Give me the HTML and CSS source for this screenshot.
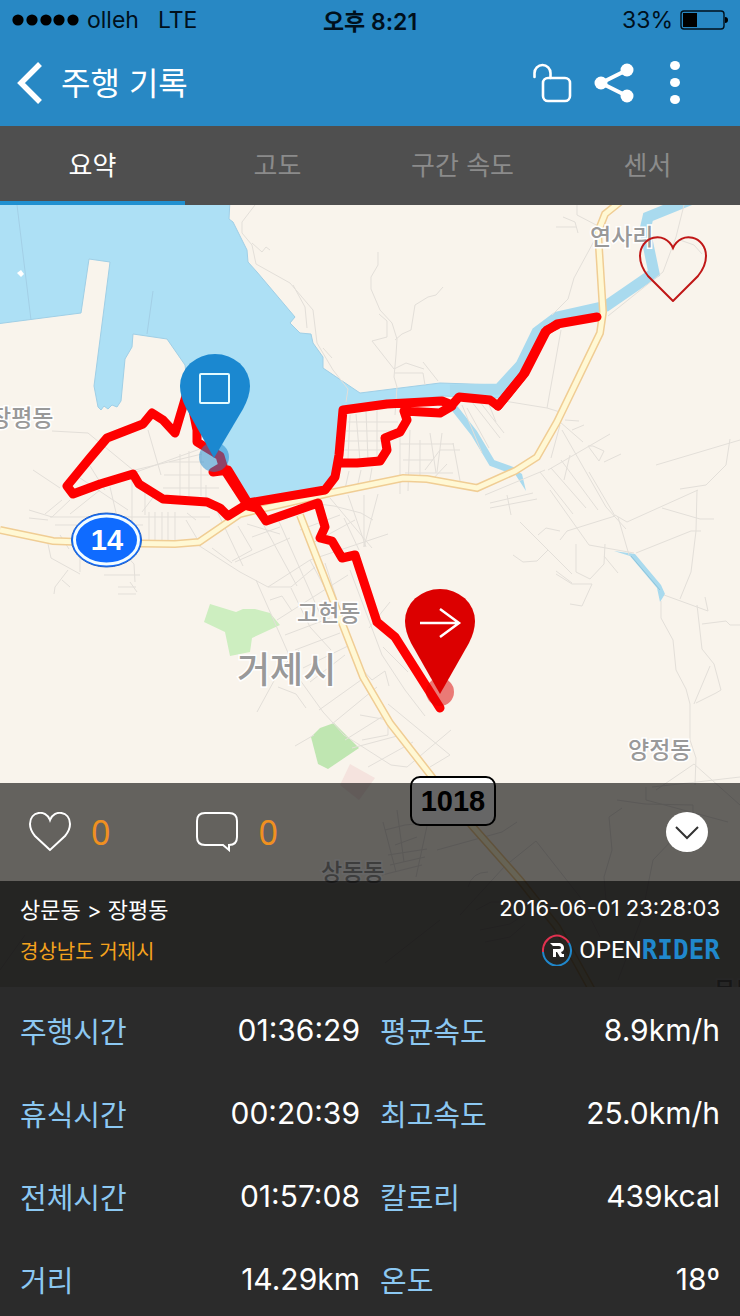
FILE: index.html
```html
<!DOCTYPE html>
<html lang="ko">
<head>
  <meta charset="UTF-8" />
  <meta name="viewport" content="width=device-width, initial-scale=1" />
  <title>주행 기록 - OPENRIDER</title>
  <link rel="stylesheet" href="styles.css">
</head>
<body>

  <header class="header">
    <div class="status">
      <div class="carrier">
        <svg width="68" height="12" viewBox="0 0 68 12" aria-hidden="true">
          <circle cx="6" cy="6" r="5.6"/><circle cx="20" cy="6" r="5.6"/><circle cx="34" cy="6" r="5.6"/><circle cx="47" cy="6" r="5.6"/><circle cx="61" cy="6" r="5.6"/>
        </svg>
        <span>olleh</span>
        <span class="network">LTE</span>
      </div>
      <div class="clock">오후 8:21</div>
      <div class="battery">
        <span>33%</span>
        <svg width="48" height="20" viewBox="0 0 48 20" aria-hidden="true">
          <rect x="1" y="1" width="43" height="18" rx="3" fill="none" stroke="#00101c" stroke-width="1.4"/>
          <rect x="3" y="3" width="14" height="14"/>
          <path d="M45 7q3 0 3 3t-3 3z"/>
        </svg>
      </div>
    </div>

    <div class="titlebar">
      <button class="icon-btn" aria-label="뒤로">
        <svg width="26" height="42" viewBox="0 0 26 42"><path d="M24 2 5 21l19 19" fill="none" stroke="#fff" stroke-width="5.5"/></svg>
      </button>
      <h1>주행 기록</h1>
      <div class="tools">
        <button class="icon-btn" aria-label="잠금 해제">
          <svg width="40" height="40" viewBox="0 0 40 40" fill="none" stroke="#fff" stroke-width="2.6" stroke-linecap="round">
            <path d="M2.500 14v-4a8 8 0 0 1 16 0v5"/>
            <rect x="11" y="15" width="27" height="23" rx="5"/>
          </svg>
        </button>
        <button class="icon-btn" aria-label="공유">
          <svg width="40" height="40" viewBox="0 0 40 40" fill="#fff">
            <path d="M7 20 33 7M7 20l26 13" stroke="#fff" stroke-width="4"/>
            <circle cx="7" cy="20" r="6.500"/><circle cx="33" cy="7" r="6.500"/><circle cx="33" cy="33" r="6.500"/>
          </svg>
        </button>
        <button class="icon-btn" aria-label="더보기">
          <svg width="40" height="44" viewBox="0 0 40 44" fill="#fff">
            <ellipse cx="19" cy="4.500" rx="5" ry="4.500"/><ellipse cx="19" cy="21.500" rx="5" ry="4.500"/><ellipse cx="19" cy="38.500" rx="5" ry="4.500"/>
          </svg>
        </button>
      </div>
    </div>
  </header>

  <nav class="tabs">
    <button class="tab active">요약</button>
    <button class="tab">고도</button>
    <button class="tab">구간 속도</button>
    <button class="tab">센서</button>
  </nav>

  <main class="map">
    <svg class="map-canvas" viewBox="0 205 740 782" role="img" aria-label="주행 경로 지도">
      <rect x="0" y="205" width="740" height="782" fill="#f9f4ec"/>

      <!-- sea -->
      <path class="sea" d="M-4 200V324L81 313 89 259 110 262 94 386 98 407 101 410 104 406 108 409 112 405 117 407 121 401 125 359 132 347 133 334 167 339 185 365 192 420 222 455 248 502 325 492 338 460 343 408 442 396 500 398 515 380 500 385 440 383 360 393 323 368V357L313 343 311 334 300 333 290 323 295 317 257 272 248 262 247 250 233 222 229 219 230 200z"/>
      <path d="M17 205 31 320M153 291 147 334" fill="none" stroke="#a3cfe6"/>
      <path d="M17 273l4-3 3 4-3 3z" fill="#fff"/>

      <!-- rivers -->
      <path class="river" stroke-width="11" d="M690 200 648 217 645 230 654 273 606 306 557 317 537 332 521 365 499 389 450 390"/>
      <path class="river" stroke-width="7" d="M452 405 474 433 492 463 514 471"/>
      <path d="M509 466 522 474 526 491 515 474zM614 551l21 3 26 31 4 9-5 8-3-14-27-32z" fill="#a9daee"/>
      <path d="M631 556 660 590" stroke="#8fc4da" fill="none"/>

      <!-- parks -->
      <path d="M210 604 236 612 243 609 255 609 270 613 280 625 252 638 250 652 230 656 225 632 204 622z" fill="#cdeec0"/>
      <path d="M311 737 320 728 334 723 359 748 328 769 318 764z" fill="#bfe6b1"/>
      <path d="M350 764 375 778 359 800 340 785z" fill="#f5e3de"/>

      <!-- minor streets -->
      <g class="street">
        <path d="M255 205 242 222 242 233 252 245 256 264 290 283 313 310 317 343 333 370 348 389 346 402M293 285 305 307 307 328M252 243 262 252 266 247 270 250M323 348l9 10"/>
        <path d="M378 252v13l-7 12v12l9 21 12 13 5 16-1 16-2 22 3 10-2 28M379 314l8 7v16l-15 4 22 28 12-6 18 6M395 340l7-6 9-4 4-25 13-8 8-2 7-8M395 373h28l2 12M423 362l15 19"/>
        <path d="M577 205v10l23 12M563 217l12 5 3 11M556 227h20M600 230 574 278 568 299 552 315M684 205 676 237 663 272 608 316M680 240l14 5 8 9M561 330 547 408 498 400M547 408 560 412"/>
        <path d="M52 431 88 433 133 470M148 430 161 475M33 470 60 488M90 466 105 490M80 478 128 510M128 475 200 449M62 500 45 514M135 470 202 454M180 454v43M189 451v47M169 462h35M164 475h49M163 488h56M201 452v44"/>
        <path d="M29 510 52 517 70 500M29 518 48 520M50 517h160M55 525h88M132 475v73M142 512 155 495M149 512v28M155 512v28M162 512v28M168 512v28M175 512v28M186 520l13 22M187 513l9 7M60 535l9 14M48 544l3 14 29 16M80 548v24M68 570l-13 17-1 7M62 580l8 7M120 549l14 15 1 18M104 575h36M118 587h18M118 594h18M130 582l7 10"/>
        <path d="M110 487 122 538M100 490 70 514M145 485v30M206 485v18M198 545 240 572 268 587 310 560M212 548 232 563M232 561 252 550 238 526M235 562 290 538M247 524l33 10M252 537l28-10M262 522l35 64M277 517l48 108M217 511l26 55"/>
        <path d="M256 580 300 680 323 712 344 735 391 765 407 767 451 730M268 587l23 0 24-20M291 588 310 627 331 650M310 560 343 622M270 600l12-4 10 15M277 620 348 575M285 635 330 618M295 650 340 633M303 668 350 645M310 682 345 655M319 710 361 680M332 724 377 687M345 740 388 713M352 748 401 735M368 767 413 742M310 560 388 534M309 545 355 520M300 530 340 515M325 563 358 665 372 680M350 570 382 655 405 690 425 716M369 628 390 602M383 647 408 672M372 680l13-9 4 15"/>
        <path d="M344 518 359 550M330 498l42 50M348 495l18 52M364 495v52M378 494l-14 53M319 504l15 2 27 7 12 7M299 650l-18 18-24 44M278 687l18 7 10 14M360 715l28 5v15l-26 5M314 735l-19 11M388 704 450 755 430 767"/>
        <path d="M350 415l-2 44M356 414l4 47M366 411l2 49M377 408v53M348 422h50M346 431h50M344 441h40M344 450h40M400 432v62M410 430l-2 61M400 444h54M403 460h30M405 473h48M420 440v42M430 433l6 40M442 433l-5 39M453 443l8 43M460 450h-20l-15 20M430 482l17-18M349 471l-4 18M361 470l-4 18M372 468l-3 17M462 405l20 48M467 408l22 40M472 402l28 36M480 402l24 31M488 402l8 20"/>
        <path d="M560 422l23 20M565 420l14 1M572 430l12-5M548 470 610 434M551 458 560 425M562 430l44 77 20 22M588 446l11 15 5-10-11-5zM604 462l17-8M540 472l33 42M551 468l35 40M561 460l37 50M570 455l-6 25M485 495l60-25M490 508l47-9M507 495l4 20"/>
        <path d="M550 490 589 545 634 553M520 522l52 52M538 535l8-7 14 3M560 540l7-9 48-15-26-44M618 517 629 555M490 503l43-10M615 515l12 7 71-32M662 508 700 519 714 519M697 490 696 531 691 572 680 599M636 553l55-22h10M664 595l44 16-3-14M661 601v17l12 22 3 30 10 19 4 15v36l6 18-1 27M697 605l5 44 12 15 7 26-5 3-20 10M710 666l-16 38M702 624l24-3 4 4h10M576 544v28l14 7 14-15 1-20M604 556l14 17M556 574l16 10 20 0-10 22-12-2M572 583l-16-12M513 555l10 7 14-1 11-11"/>
        <path d="M656 465 740 440M656 790 694 764 740 805M730 439 726 465 706 485 680 489M646 787v13l82 22M652 787l45-5 43-5"/>
        <path d="M617 800l28 4 48 1M622 808l-13 9 3 33-8 27 3 35M693 805v13l-40 42-12 60-23 60M536 841 580 897 600 937M536 841 505 866 460 915M385 830l20-5 28-3M395 845l22-8M388 855l39-6M390 865l35-8M382 875l40-10M383 822l13 50M397 810l7 52M430 812l-14 65M437 850l65-18 15-10M440 920l-55 43M0 970l25-35M420 820l50-37"/>
        <path d="M468 887q4-15 20-15M476 910l15-8 20 0 10 16M480 930l30-6 20-13M485 942l25-5 15-13"/>
      </g>

      <!-- main roads -->
      <path class="road-edge" d="M0 530 53 541 106 543 175 544 199 542 240 514 330 493 403 478 427 479 477 488 515 471 537 457 557 422 600 333 603 312 598 232 605 214 620 202M300 515 328 587 363 677 390 723 432 777 473 827 520 880 557 927 592 990"/>
      <path class="road" d="M0 530 53 541 106 543 175 544 199 542 240 514 330 493 403 478 427 479 477 488 515 471 537 457 557 422 600 333 603 312 598 232 605 214 620 202M300 515 328 587 363 677 390 723 432 777 473 827 520 880 557 927 592 990"/>

      <!-- place names -->
      <g class="place">
        <text x="-10" y="426">장평동</text>
        <text x="590" y="245">연사리</text>
        <text x="297" y="621">고현동</text>
        <text x="628" y="758">양정동</text>
        <text x="321" y="880">상동동</text>
        <text x="714" y="998">문동동</text>
        <text class="city" x="237" y="683">거제시</text>
      </g>

      <!-- ridden track -->
      <path class="track" d="M186 396 175 433 163 420 152 413 143 424 107 438 90 458 67 486 73 494 100 484 133 474 139 484 163 499 207 502 220 508 228 516 244 506M192 405 197 430 197 442 220 456 223 466 213 472 228 470 248 503 325 490 335 477 339 455 343 410 387 404 442 401 452 405 459 397 490 400 498 406 523 375 545 332 557 324 597 317M340 463 357 463 380 461 387 450 385 438 400 432 407 420 404 411 440 413 452 406M222 466 248 506 257 508 266 521 318 503 325 527 320 538 332 541 342 558 355 555 377 622 395 637 440 708"/>
      <path class="track" stroke-linejoin="round" d="M498 406 525 373 547 330 557 325"/>

      <!-- finish pin -->
      <circle cx="214" cy="457" r="15" fill="#1c88cf" fill-opacity=".5"/>
      <path d="M214 458 186 408Q180 396 180 386A35 32 0 0 1 250 386Q250 396 243 409z" fill="#1b88d0"/>
      <rect x="200" y="374" width="29" height="29" rx="1" fill="none" stroke="#e3fbff" stroke-width="2"/>

      <!-- start pin -->
      <circle cx="440" cy="692" r="14" fill="#dc0000" fill-opacity=".5"/>
      <path d="M440 694 411 643Q405 631 405 621A35 32 0 0 1 475 621Q475 631 469 643z" fill="#dc0000"/>
      <path d="M420 623h39M440 609l19 14-19 14" fill="none" stroke="#fff" stroke-width="2.500"/>

      <!-- road shields -->
      <ellipse cx="106.500" cy="540" rx="35" ry="27" fill="#0f6bff" stroke="#1f5fc4"/>
      <ellipse cx="106.500" cy="540" rx="32" ry="24" fill="#0f6bff" stroke="#f2fcff" stroke-width="3"/>
      <text class="shield shield-national" x="107" y="550">14</text>
      <rect x="411" y="777" width="84" height="48" rx="9" fill="#fff" stroke="#000" stroke-width="2"/>
      <text class="shield" x="453" y="811">1018</text>
    </svg>

    <button class="icon-btn like-map" aria-label="좋아요">
      <svg width="70" height="66" viewBox="0 0 70 66"><path d="M35 65 10 40Q2 30 2 20C2 0 27-6 35 12 43-6 68 0 68 20Q68 30 60 40z" fill="none" stroke="#c01717" stroke-width="2"/></svg>
    </button>

    <section class="panel">
      <div class="actions">
        <button class="count">
          <svg width="42" height="40" viewBox="0 0 42 40" aria-label="좋아요"><path d="M21 38 6 24Q1 18 1 12C1-1 17-3 21 8 25-3 41-1 41 12Q41 18 36 24z" fill="none" stroke="#fff" stroke-width="2"/></svg>
          0
        </button>
        <button class="count">
          <svg width="42" height="40" viewBox="0 0 42 40" aria-label="댓글"><path d="M9 1H33Q41 1 41 9V25Q41 33 33 33V38L27 33H9Q1 33 1 25V9Q1 1 9 1z" fill="none" stroke="#fff" stroke-width="2"/></svg>
          0
        </button>
        <button class="icon-btn collapse" aria-label="접기">
          <svg width="42" height="40" viewBox="0 0 42 40"><ellipse cx="21" cy="20" rx="21" ry="20" fill="#fff"/><path d="M10 15 21 26 32 15" fill="none" stroke="#333" stroke-width="2"/></svg>
        </button>
      </div>

      <div class="meta">
        <div class="row">
          <span class="route">상문동 &gt; 장평동</span>
          <time datetime="2016-06-01T23:28:03">2016-06-01 23:28:03</time>
        </div>
        <div class="row">
          <span class="region">경상남도 거제시</span>
          <span class="brand">
            <svg width="30" height="32" viewBox="0 0 30 32" aria-hidden="true">
              <path d="M1 18A14 15 0 0 1 27 9" fill="none" stroke="#e0314f" stroke-width="2"/>
              <path d="M27 9A14 15 0 1 1 1 18" fill="none" stroke="#2088cc" stroke-width="2"/>
              <path d="M8 9H18Q22 10 22 14 22 17 19 18L20 20H22V23H18L15 18H14V23H11V15H17Q19 15 19 13.500T17 12H11z" fill="#fff"/>
            </svg>
            <span class="open">OPEN</span><span class="rider">RIDER</span>
          </span>
        </div>
      </div>
    </section>
  </main>

  <dl class="stats">
    <div class="stat"><dt>주행시간</dt><dd>01:36:29</dd></div>
    <div class="stat"><dt>평균속도</dt><dd>8.9km/h</dd></div>
    <div class="stat"><dt>휴식시간</dt><dd>00:20:39</dd></div>
    <div class="stat"><dt>최고속도</dt><dd>25.0km/h</dd></div>
    <div class="stat"><dt>전체시간</dt><dd>01:57:08</dd></div>
    <div class="stat"><dt>칼로리</dt><dd>439kcal</dd></div>
    <div class="stat"><dt>거리</dt><dd>14.29km</dd></div>
    <div class="stat"><dt>온도</dt><dd>18º</dd></div>
  </dl>

</body>
</html>
```
FILE: styles.css
```css
* {
  box-sizing: border-box;
}

body {
  margin: 0;
  font-family: Inter, 'Noto Sans CJK KR', sans-serif;
  background: #2b2b2b;
  color: #fff;
}

button {
  padding: 0;
  border: none;
  background: none;
  color: inherit;
  font-family: inherit;
  cursor: pointer;
}

svg {
  display: block;
}

/* header */
.header {
  background: #2888c4;
}

.status {
  display: grid;
  grid-template-columns: 1fr auto 1fr;
  align-items: center;
  height: 40px;
  padding: 0 12px;
  color: #00101c;
  font-size: 23px;
}

.carrier,
.battery {
  display: flex;
  align-items: center;
  gap: 7px;
}

.network {
  margin-left: 12px;
}

.clock {
  font-weight: 600;
}

.battery {
  justify-content: flex-end;
}

.titlebar {
  display: flex;
  align-items: center;
  height: 86px;
  padding: 0 44px 0 16px;
}

.titlebar h1 {
  margin: 0 0 0 19px;
  padding-bottom: 4px;
  font-size: 32px;
  font-weight: 400;
}

.tools {
  display: flex;
  align-items: center;
  gap: 22px;
  margin-left: auto;
}

/* tabs */
.tabs {
  display: grid;
  grid-template-columns: repeat(4, 1fr);
  background: #4f4f4f;
}

.tab {
  height: 79px;
  border-bottom: 4px solid transparent;
  color: #8b8b8b;
  font-size: 26px;
}

.tab.active {
  border-color: #2090d0;
  color: #fff;
}

/* map */
.map {
  position: relative;
}

.map-canvas {
  width: 100%;
  height: auto;
}

.sea {
  fill: #ade0f5;
  stroke: #a0cfe6;
}

.river {
  fill: none;
  stroke: #a9daee;
}

.street {
  fill: none;
  stroke: #e3dfd9;
}

.road-edge {
  fill: none;
  stroke: #f0cd94;
  stroke-width: 8px;
}

.road {
  fill: none;
  stroke: #fff8d4;
  stroke-width: 5px;
}

.track {
  fill: none;
  stroke: #fe0000;
  stroke-width: 9px;
  stroke-linecap: round;
  stroke-linejoin: round;
}

.place {
  fill: #999;
  stroke: #fff;
  stroke-width: 3px;
  paint-order: stroke;
  font-size: 23px;
  font-weight: 500;
}

.city {
  font-size: 36px;
}

.shield {
  font-family: 'Liberation Sans', sans-serif;
  font-size: 29px;
  font-weight: bold;
  text-anchor: middle;
}

.shield-national {
  fill: #fff;
}

.like-map {
  position: absolute;
  top: 31px;
  right: 32px;
}

/* panel over the map */
.panel {
  position: absolute;
  left: 0;
  right: 0;
  bottom: 0;
}

.actions {
  display: flex;
  align-items: center;
  height: 98px;
  padding: 0 32px 0 29px;
  background: rgba(0, 0, 0, 0.6);
}

.count {
  display: flex;
  align-items: center;
  gap: 20px;
  margin-right: 86px;
  color: #f09020;
  font-family: 'Noto Sans', sans-serif;
  font-size: 34px;
}

.collapse {
  margin-left: auto;
}

.meta {
  height: 106px;
  padding: 6px 20px;
  background: rgba(0, 0, 0, 0.85);
  font-size: 22px;
}

.row {
  display: flex;
  align-items: center;
  justify-content: space-between;
  height: 42px;
}

.region {
  color: #f5a31d;
  font-size: 20px;
}

.brand {
  display: flex;
  align-items: center;
}

.open {
  margin-left: 7px;
  font-family: Roboto, sans-serif;
  font-size: 24px;
}

.rider {
  color: #2088cc;
  font-family: 'DejaVu Sans Mono', monospace;
  font-size: 26px;
  font-weight: bold;
}

/* ride numbers */
.stats {
  display: grid;
  grid-template-columns: 1fr 1fr;
  gap: 43px 20px;
  margin: 0;
  padding: 23px 20px 17px;
}

.stat {
  display: flex;
  align-items: center;
  justify-content: space-between;
  height: 40px;
}

.stat dt {
  color: #8cc8f2;
  font-size: 29px;
}

.stat dd {
  margin: 0;
  font-size: 30px;
}
```
